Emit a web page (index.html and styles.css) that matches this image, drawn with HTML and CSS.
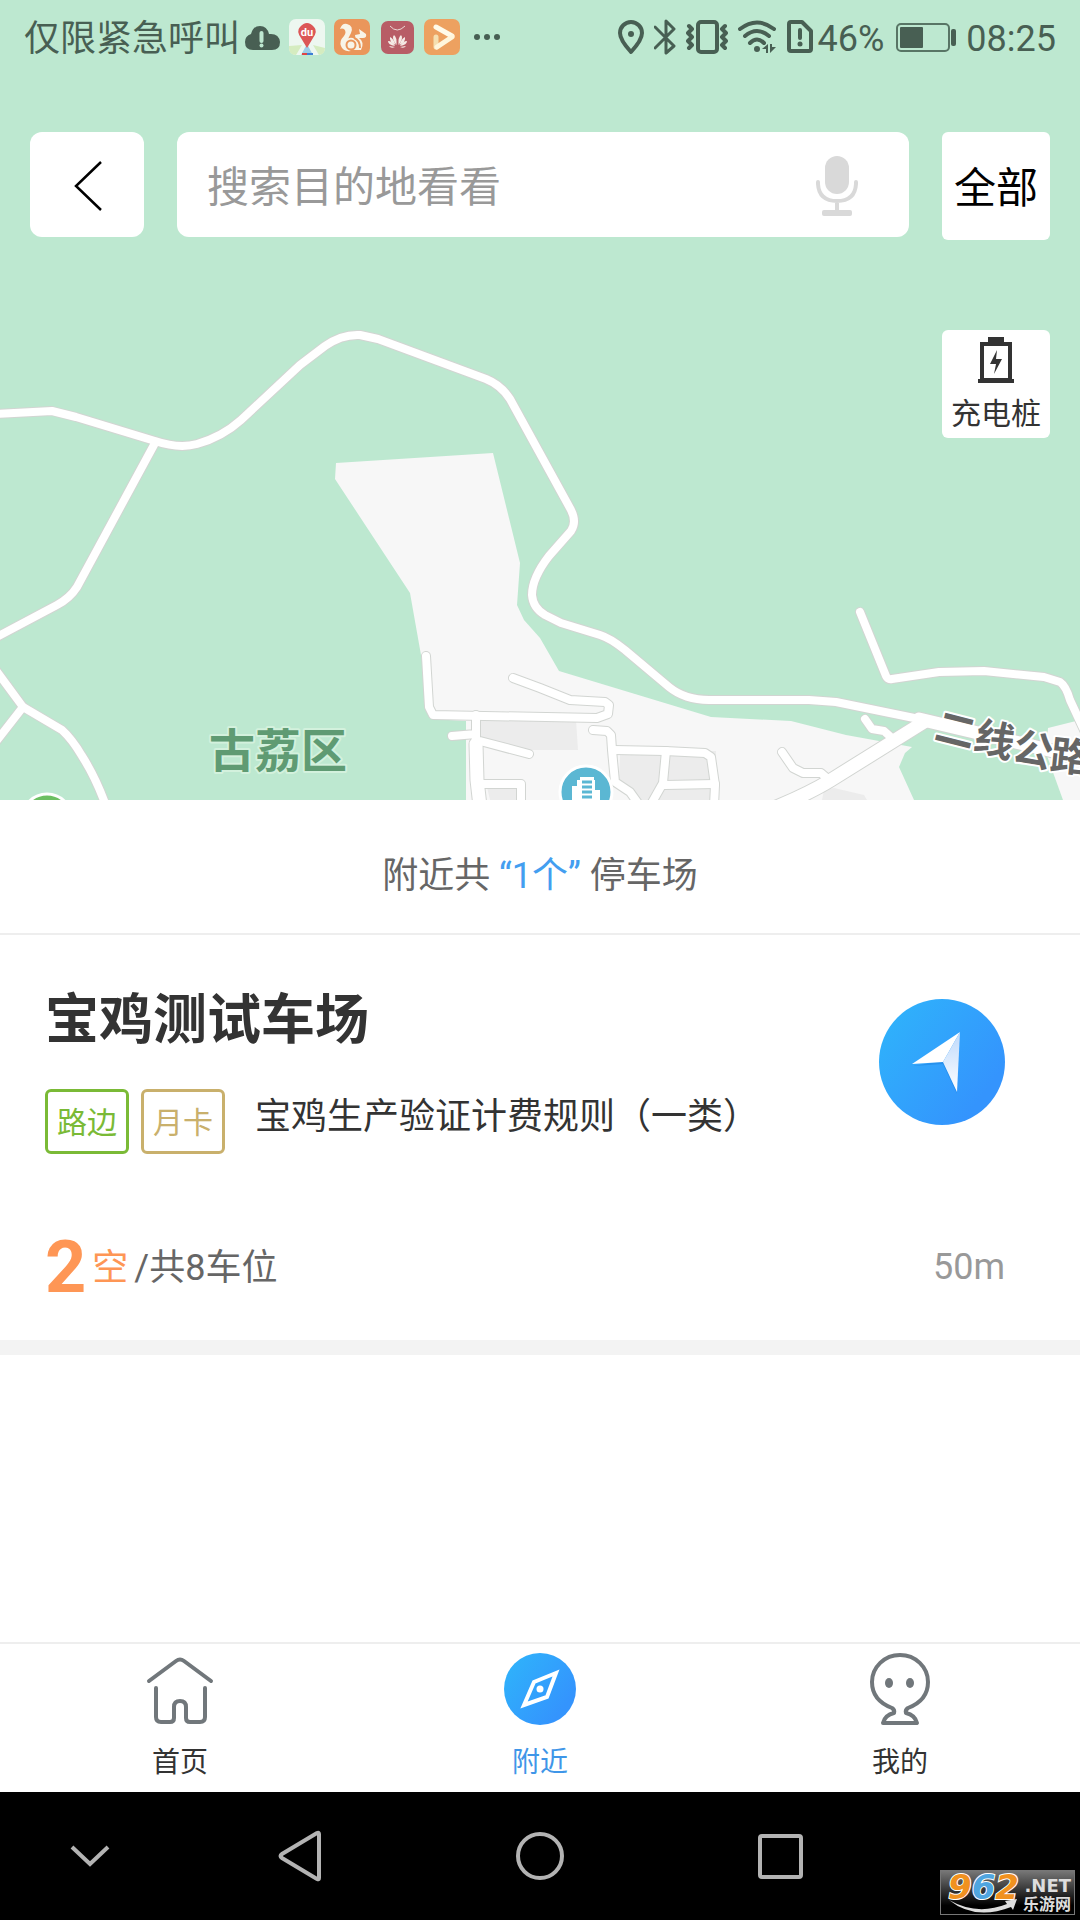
FILE: index.html
```html
<!DOCTYPE html>
<html lang="zh-CN">
<head>
  <meta charset="UTF-8">
  <title>附近停车场</title>
  <meta name="viewport" content="width=device-width, initial-scale=1.0">
  <link rel="stylesheet" href="styles.css">
</head>
<body>
<div class="app">

  <!-- Map -->
  <section class="map">
    <svg class="map-canvas" viewBox="0 0 1080 800" preserveAspectRatio="xMidYMid slice" aria-hidden="true">
      <defs>
        <g id="roads">
          <path d="M-5 414 L52 411 L76 417 L155 441 Q179 449 197 444 Q222 437 241 420 L300 365 L325 346 Q342 334 360 335 L378 339 L486 379 Q501 385 510 399 L571 510 Q577 522 571 531 L549 556 Q532 578 532 595 Q533 608 545 615 L561 623 L600 635 Q610 638 625 650 L669 687 Q685 700 709 700 L809 700 L836 702 L924 720"/>
          <path d="M155 443 L77 587 Q70 598 57 605 L-5 638"/>
          <path d="M-5 669 L23 707 L62 730 Q72 739 82 756 Q96 778 106 806"/>
          <path d="M23 707 L-5 743"/>
          <path d="M860 612 L886 676 Q888 680 892 679 L939 672 L984 671 L1044 677 L1060 682 Q1066 686 1070 700 L1084 730"/>
          <path d="M865 719 L872 729 L884 731 L893 739"/>
          <path d="M782 752 L793 768 L803 773 L821 773 L828 779"/>
        </g>
        <g id="streets">
          <path d="M426 656 L429 707 L433 715 L597 718 L608 714 L609 705 L605 702 L570 700 L540 688 L513 678"/>
          <path d="M476 715 L476 741 M452 736 L476 734 M480 741 L529 754 M480 784 L521 784 L521 806"/>
          <path d="M593 730 L607 731 L611 735 L612 750 L615 782 L630 792 L640 806"/>
          <path d="M614 750 L665 751 L705 753 L711 757 L715 785 L714 806"/>
          <path d="M666 751 L663 783 L650 806 M665 785 L715 784"/>
        </g>
        <g id="main-roads">
          <path d="M924 722 L831 780 Q810 793 774 808"/>
          <path d="M476 744 L477 780 L480 806"/>
        </g>
        <path id="highway" d="M919 719 L974 732 L1053 751 L1090 762"/>
        <path id="highway-name" d="M933 739 L1047 768 Q1060 771 1130 776"/>
      </defs>

      <rect class="forest" width="1080" height="800"/>
      <path class="land" d="M336 463 L493 453 L520 563 L517 605 L524 620 L540 638 L559 671 L711 717 L791 721 L846 735 L912 747 L905 753 L899 767 L914 800 L466 800 L466 721 L432 719 L421 655 L410 593 L335 479 Z"/>
      <path class="land" d="M1063 800 L1046 753 L1048 728 L1080 720 V800 Z"/>
      <path class="block" d="M480 720 H576 L578 750 H515 L480 741 Z M620 755 H662 L660 784 L650 800 H641 L619 782 Z M668 751 H716 V800 H652 Z M487 787 H520 V800 H490 Z M822 800 L824 790 L834 788 L864 795 L867 800 Z"/>

      <use href="#roads" class="road-edge"/>
      <use href="#streets" class="road-edge"/>
      <use href="#highway" class="main-edge"/>
      <use href="#main-roads" class="main-edge"/>
      <use href="#roads" class="road"/>
      <use href="#streets" class="road"/>
      <use href="#highway" class="main"/>
      <use href="#main-roads" class="main"/>

      <!-- place markers -->
      <circle class="poi-blue" cx="586" cy="792" r="26"/>
      <g class="building">
        <path d="M572 800 V786 H577 V780 H580 V777 H594 V780 H595 V790 H600 V800 Z"/>
        <path class="windows" d="M582 782 H592 M582 787 H592 M582 792 H592 M582 797 H592"/>
      </g>
      <circle class="poi-green" cx="47" cy="819" r="25"/>

      <text class="district" x="209" y="767">古荔区</text>
      <text class="highway-text"><textPath href="#highway-name">二线公路</textPath></text>
    </svg>

    <div class="map-overlay">
      <header class="status-bar">
        <div class="status-left">
          <span class="status-text">仅限紧急呼叫</span>
          <div class="status-apps">
            <svg width="36" height="36" viewBox="0 0 36 36" aria-hidden="true">
              <path d="M9 31 Q1 31 1 23 Q1 17 7 15 Q9 7 16 7 Q23 7 25 15 Q35 14 36 23 Q36 31 28 31 Z" fill="#485f53"/>
              <path d="M17.500 14 V22" stroke="#bde8d0" stroke-width="4" stroke-linecap="round"/>
              <circle cx="17.500" cy="26.500" r="2" fill="#bde8d0"/>
            </svg>
            <svg width="36" height="36" viewBox="0 0 36 36" aria-hidden="true">
              <rect width="36" height="36" rx="7" fill="#edf7f0"/>
              <path d="M0 27 L13 26 L7 36 Q0 36 0 29 Z M24 26 L36 29 Q36 35 30 36 Z" fill="#d5ecc0"/>
              <path d="M18 25 L24 36 H12 Z" fill="#9ccde8"/>
              <path d="M13 35 H18" stroke="#e04444" stroke-width="2"/>
              <path d="M18 35 H24" stroke="#3d7ed6" stroke-width="2"/>
              <path d="M18 29 L12 19 Q7 12 11 8 Q18 0 25 8 Q29 12 24 19 Z" fill="#dc5656"/>
              <text class="du" x="18" y="17">du</text>
            </svg>
            <svg width="36" height="36" viewBox="0 0 36 36" aria-hidden="true">
              <rect width="36" height="36" rx="7" fill="#ea965b"/>
              <path d="M6 10 Q8 4 13 5 Q20 7 17 14 Q14 19 13 24 Q12 30 17 32 Q9 33 7 27 Q5 22 10 17 Q13 13 10 10 Q8 9 6 10 Z" fill="#f8f4e8"/>
              <path d="M21 16 L26 15 L25 10 L32 15 Q33 19 29 19 L25 19 Q31 23 27 31 H13 Q8 27 12 21 Q16 17 21 20 Q26 24 23 30" fill="#f8f4e8"/>
              <circle cx="17" cy="26" r="4.500" fill="none" stroke="#ea965b" stroke-width="2"/>
              <path d="M20 19 Q26 21 26 29" fill="none" stroke="#ea965b" stroke-width="2"/>
            </svg>
            <svg width="36" height="36" viewBox="0 0 36 36" aria-hidden="true">
              <rect x="2" y="2" width="33" height="33" rx="7" fill="#b85d66"/>
              <path d="M11 7 Q18 15 26 7" fill="none" stroke="#ecd9d6" stroke-width="1"/>
              <g fill="#f5ebe6">
                <path d="M17.500 26 Q12 19 15 16 Q18 18 17.500 26 Z M19.500 26 Q25 19 22 16 Q19 18 19.500 26 Z"/>
                <path d="M16.500 26 Q10 23 11 18 Q15 20 16.500 26 Z M20.500 26 Q27 23 26 18 Q22 20 20.500 26 Z"/>
                <path d="M16 27 Q9 26 9 22 Q13 22 16 27 Z M21 27 Q28 26 28 22 Q24 22 21 27 Z"/>
                <path d="M16 28 Q12 30 10 27 Z M21 28 Q25 30 27 27 Z"/>
              </g>
            </svg>
            <svg width="36" height="36" viewBox="0 0 36 36" aria-hidden="true">
              <rect width="36" height="36" rx="7" fill="#eda160"/>
              <path d="M12 8 L28 17" stroke="#fffbea" stroke-width="5" stroke-linecap="round"/>
              <path d="M12 18 V28" stroke="#f5dfb0" stroke-width="5" stroke-linecap="round"/>
              <path d="M13 28 L28 18" stroke="#fff6dc" stroke-width="5" stroke-linecap="round"/>
            </svg>
            <svg width="36" height="36" viewBox="0 0 36 36" fill="#485f53" aria-hidden="true">
              <circle cx="8" cy="18" r="3"/><circle cx="18" cy="18" r="3"/><circle cx="28" cy="18" r="3"/>
            </svg>
          </div>
        </div>
        <div class="status-right">
          <svg class="line" width="26" height="36" viewBox="0 0 26 36" aria-hidden="true">
            <path d="M13 33 Q2 21 2 14 A11 11 0 0 1 24 14 Q24 21 13 33 Z"/>
            <circle cx="13" cy="15" r="3" fill="#485f53" stroke="none"/>
          </svg>
          <svg class="line thin" width="22" height="36" viewBox="0 0 22 36" aria-hidden="true">
            <path d="M1 8 L20 27 L12 34 V2 L20 10 L1 29"/>
          </svg>
          <svg class="line" width="42" height="36" viewBox="0 0 42 36" aria-hidden="true">
            <rect x="12" y="3" width="19" height="30" rx="3"/>
            <path d="M3 7 L6 10 L2 14 L6 18 L2 22 L6 26 L3 29 M39 7 L36 10 L40 14 L36 18 L40 22 L36 26 L39 29"/>
          </svg>
          <svg class="line" width="38" height="36" viewBox="0 0 38 36" aria-hidden="true">
            <path d="M2 10 Q19 -3 36 10 M7 17 Q19 7 31 17 M12 24 Q19 17 26 24"/>
            <circle cx="19" cy="30" r="3" fill="#485f53" stroke="none"/>
            <path d="M24 30 L30 25 V34 H28 V30 Z M32 25 V34 L38 28 H34 V25 Z" fill="#485f53" stroke="none"/>
          </svg>
          <div class="status-sim">
            <svg class="line" width="28" height="36" viewBox="0 0 28 36" aria-hidden="true">
              <path d="M5 3 H16 L25 12 V30 Q25 32 23 32 H5 Q3 32 3 30 V5 Q3 3 5 3 Z M14 11 V19"/>
              <circle cx="14" cy="25" r="2.500" fill="#485f53" stroke="none"/>
            </svg>
            <span class="status-text">46%</span>
          </div>
          <svg width="62" height="36" viewBox="0 0 62 36" fill="none" aria-hidden="true">
            <rect x="3" y="5" width="52" height="27" rx="4" stroke="#587565" stroke-width="2"/>
            <rect x="6" y="8" width="23" height="21" rx="1" fill="#485f53"/>
            <rect x="57" y="10" width="5" height="17" rx="2" fill="#485f53"/>
          </svg>
          <time class="status-text">08:25</time>
        </div>
      </header>

      <div class="search-row">
        <button class="back-btn" type="button" aria-label="返回">
          <svg width="32" height="52" viewBox="0 0 32 52" aria-hidden="true">
            <path d="M30 3 L5 27 L30 51" fill="none" stroke="#000" stroke-width="2.500"/>
          </svg>
        </button>
        <div class="search-box">
          <input type="search" placeholder="搜索目的地看看" aria-label="搜索目的地看看">
          <button class="mic-btn" type="button" aria-label="语音搜索">
            <svg width="42" height="60" viewBox="0 0 42 60" aria-hidden="true">
              <rect x="9" y="0" width="24" height="38" rx="12" fill="#d9d9d9"/>
              <path d="M2 26 V28 Q3 45 21 45 Q39 45 40 28 V26 M21 45 V57" fill="none" stroke="#d9d9d9" stroke-width="4" stroke-linecap="round"/>
              <rect x="6" y="54" width="30" height="6" rx="2" fill="#d9d9d9"/>
            </svg>
          </button>
        </div>
        <button class="all-btn" type="button">全部</button>
      </div>

      <button class="charge-btn" type="button">
        <svg width="36" height="48" viewBox="0 0 36 48" aria-hidden="true">
          <path d="M10 1 H26 V6 H10 Z" fill="#333"/>
          <path d="M4 8 H32 V44 H4 Z" fill="none" stroke="#333" stroke-width="4"/>
          <path d="M0 43 H36 V47 H0 Z" fill="#333"/>
          <path d="M19 14 L12 28 H18 L16 38 L24 23 H18 Z" fill="#333"/>
        </svg>
        <span>充电桩</span>
      </button>
    </div>
  </section>

  <!-- Nearby list -->
  <main class="nearby">
    <p class="summary">附近共 <span class="count">“1个”</span> 停车场</p>

    <article class="lot">
      <div class="lot-head">
        <div>
          <h1>宝鸡测试车场</h1>
          <div class="lot-info">
            <span class="tag tag-green">路边</span>
            <span class="tag tag-gold">月卡</span>
            <span class="rule">宝鸡生产验证计费规则（一类）</span>
          </div>
        </div>
        <button class="go-btn" type="button" aria-label="导航">
          <svg width="126" height="126" viewBox="0 0 126 126" aria-hidden="true">
            <defs>
              <linearGradient id="blue" x1="0" y1="0.200" x2="0.800" y2="0.800">
                <stop offset="0" stop-color="#2fb2fb"/>
                <stop offset="1" stop-color="#3494fd"/>
              </linearGradient>
              <linearGradient id="wing" x1="0" y1="0" x2="0" y2="1">
                <stop offset="0" stop-color="#bdd9fc"/>
                <stop offset="1" stop-color="#fff"/>
              </linearGradient>
            </defs>
            <circle cx="63" cy="63" r="63" fill="url(#blue)"/>
            <path d="M34 67 L64 65 L78 95 L77 90 L64 62 Z" fill="#197fdd" opacity="0.500"/>
            <path d="M81 33 L33 65 L64 63 Z" fill="#fff"/>
            <path d="M81 33 L64 63 L78 93 Z" fill="url(#wing)"/>
          </svg>
        </button>
      </div>
      <div class="lot-foot">
        <p class="spaces"><strong>2</strong><span class="free">空</span><span>/共8车位</span></p>
        <span class="distance">50m</span>
      </div>
    </article>
  </main>

  <!-- Tabs -->
  <nav class="tabs">
    <a href="#home">
      <svg width="72" height="72" viewBox="0 0 72 72" fill="none" stroke="#71777b" stroke-width="4" stroke-linecap="round" stroke-linejoin="round" aria-hidden="true">
        <path d="M5 28 L32 8 Q36 5 40 8 L67 28"/>
        <path d="M12 35 V64 Q12 69 17 69 H26 Q30 69 30 65 V54 Q30 48 36 48 Q42 48 42 54 V65 Q42 69 46 69 H56 Q61 69 61 64 V35"/>
      </svg>
      <span>首页</span>
    </a>
    <a class="active" href="#nearby">
      <svg width="72" height="72" viewBox="0 0 72 72" aria-hidden="true">
        <circle cx="36" cy="36" r="36" fill="url(#blue)"/>
        <path d="M52 20 L30 29 L20 52 L43 44 Z" fill="none" stroke="#fff" stroke-width="4"/>
        <circle cx="36" cy="36" r="3.500" fill="#fff"/>
      </svg>
      <span>附近</span>
    </a>
    <a href="#mine">
      <svg width="72" height="72" viewBox="0 0 72 72" fill="none" stroke="#71777b" stroke-width="4" stroke-linejoin="round" aria-hidden="true">
        <path d="M30 60 Q31 57 28 55 C15 50 8 41 8 29 A28 27 0 0 1 64 29 C64 41 57 50 44 55 Q41 57 42 60 Q51 62 53 70 H19 Q21 62 30 60 Z"/>
        <ellipse cx="25" cy="30" rx="4" ry="5" fill="#71777b" stroke="none"/>
        <ellipse cx="46" cy="30" rx="4" ry="5" fill="#71777b" stroke="none"/>
      </svg>
      <span>我的</span>
    </a>
  </nav>

  <!-- System keys -->
  <footer class="sys-nav">
    <button type="button" aria-label="收起">
      <svg width="48" height="52" viewBox="0 0 48 52"><path d="M6 17 L24 34 L42 17"/></svg>
    </button>
    <button type="button" aria-label="返回上页">
      <svg width="48" height="52" viewBox="0 0 48 52"><path d="M43 4 V48 Q43 50 41 49 L6 28 Q3 26 6 24 L41 3 Q43 2 43 4 Z"/></svg>
    </button>
    <button type="button" aria-label="主屏幕">
      <svg width="48" height="52" viewBox="0 0 48 52"><circle cx="24" cy="26" r="22"/></svg>
    </button>
    <button type="button" aria-label="最近任务">
      <svg width="48" height="52" viewBox="0 0 48 52"><rect x="4" y="6" width="41" height="41" rx="2"/></svg>
    </button>
    <div class="badge">
      <svg width="72" height="14" viewBox="0 0 72 14" aria-hidden="true"><path d="M2 1 Q30 17 60 5 L58 2 L70 0 L66 11 L64 8 Q28 22 2 1 Z" fill="#ddd"/></svg>
      <b class="badge-num">9<i>6</i>2</b>
      <span class="badge-side"><b>.NET</b><b class="badge-cn">乐游网</b></span>
    </div>
  </footer>

</div>
</body>
</html>
```
FILE: styles.css
```css
* { box-sizing: border-box; }
body {
  margin: 0;
  background: #fff;
  color: #333;
  font-family: Roboto, "Noto Sans CJK SC", sans-serif;
  font-size: 36px;
  line-height: 48px;
}
h1, p { margin: 0; }
svg { display: block; flex: none; }
button {
  padding: 0; border: none; background: #fff; color: inherit;
  font: inherit; cursor: pointer;
}
a { color: inherit; text-decoration: none; }
.app { display: flex; flex-direction: column; min-height: 100vh; }

/* Map */
.map { position: relative; min-height: 800px; overflow: hidden; background: #bde8d0; }
.map-canvas { position: absolute; inset: 0; width: 100%; height: 100%; }
.map-overlay { position: relative; display: flex; flex-direction: column; }
.forest { fill: #bde8d0; }
.land { fill: #f7f7f7; }
.block { fill: #ececec; }
.road, .road-edge, .main, .main-edge { fill: none; stroke-linecap: round; stroke-linejoin: round; }
.road { stroke: #fff; stroke-width: 8px; }
.road-edge { stroke: #d2d5d2; stroke-width: 10px; }
.main { stroke: #fff; stroke-width: 13px; }
.main-edge { stroke: #d2d5d2; stroke-width: 15px; }
.poi-blue { fill: #5bb7d3; stroke: #fff; stroke-width: 3px; }
.poi-green { fill: #6cbf62; stroke: #fff; stroke-width: 3px; }
.building { fill: #fff; }
.windows { stroke: #5bb7d3; stroke-width: 3px; }
.district, .highway-text { font-weight: bold; paint-order: stroke; stroke-linejoin: round; }
.district { font-size: 46px; fill: #5f9b73; stroke: #d3f1dd; stroke-width: 4px; }
.highway-text { font-size: 40px; fill: #666; stroke: #fff; stroke-width: 4px; }

/* Status bar */
.status-bar {
  display: flex; justify-content: space-between; align-items: center;
  height: 74px; padding: 0 24px; color: #485f53;
}
.status-left { display: flex; align-items: center; gap: 4px; }
.status-apps { display: flex; gap: 9px; }
.status-right { display: flex; align-items: center; gap: 10px; }
.status-sim { display: flex; align-items: center; gap: 4px; }
.status-text { padding-top: 3px; }
.line { fill: none; stroke: #485f53; stroke-width: 4px; stroke-linecap: round; stroke-linejoin: round; }
.thin { stroke-width: 3px; }
.du { font-size: 11px; font-weight: bold; fill: #fff; text-anchor: middle; }

/* Search */
.search-row { display: flex; align-items: flex-start; gap: 33px; padding: 58px 30px 0; }
.back-btn, .search-box { height: 105px; border-radius: 12px; background: #fff; }
.back-btn { display: flex; align-items: center; justify-content: center; width: 114px; }
.search-box { display: flex; align-items: center; flex: 1; min-width: 0; padding: 3px 51px 0 30px; }
.search-box input {
  flex: 1; min-width: 0; padding: 3px 0 0; border: none; outline: none; background: none;
  font: inherit; font-size: 42px; line-height: 60px; color: #333;
}
.search-box input::placeholder { color: #999; opacity: 1; }
.all-btn, .charge-btn { width: 108px; height: 108px; border-radius: 6px; }
.all-btn { padding-top: 6px; font-size: 42px; color: #000; }
.charge-btn {
  display: flex; flex-direction: column; align-items: center; align-self: flex-end;
  gap: 10px; margin: 90px 30px 0; padding-top: 6px;
  font-size: 30px; line-height: 40px;
}

/* Nearby list */
.nearby { flex: 1; }
.summary { padding: 52px 0 33px; border-bottom: 2px solid #eee; color: #666; text-align: center; }
.count { color: #439ef0; }
.lot { padding: 48px 75px 36px 45px; border-bottom: 15px solid #f3f3f3; }
.lot-head { display: flex; justify-content: space-between; }
.lot h1 { padding-top: 2px; font-size: 54px; line-height: 72px; }
.lot-info { display: flex; gap: 12px; margin-top: 32px; }
.tag {
  width: 84px; height: 65px; border: 3px solid; border-radius: 6px;
  font-size: 30px; line-height: 62px; text-align: center;
}
.tag-green { color: #7aba36; }
.tag-gold { color: #c9b06c; }
.rule { margin-left: 18px; line-height: 56px; }
.go-btn { align-self: flex-start; margin-top: 16px; border-radius: 50%; }
.lot-foot { display: flex; justify-content: space-between; align-items: center; margin-top: 76px; }
.spaces { display: flex; align-items: center; gap: 6px; padding-top: 2px; color: #666; }
.spaces strong { font-size: 72px; line-height: 72px; color: #fe9655; }
.free { color: #fe9655; }
.distance { color: #999; }

/* Tabs */
.tabs {
  display: grid; grid-template-columns: repeat(3, 1fr);
  height: 150px; border-top: 2px solid #eee;
}
.tabs a {
  display: flex; flex-direction: column; align-items: center;
  gap: 20px; padding-top: 9px; font-size: 28px; line-height: 36px;
}
.tabs .active { color: #3f96e8; }

/* System keys */
.sys-nav {
  position: relative; display: grid; grid-template-columns: 3fr 4fr 4fr 4fr 3fr;
  align-items: center; height: 128px; background: #000;
}
.sys-nav button { display: flex; justify-content: center; background: none; }
.sys-nav button svg { fill: none; stroke: #b3b3b3; stroke-width: 4px; }
.badge {
  position: absolute; right: 5px; bottom: 5px;
  display: flex; justify-content: space-between; width: 135px; height: 45px; padding: 0 3px 0 7px;
  border: 1px solid #777; background: linear-gradient(#777, #000 80%);
  color: #ddd; font-family: "DejaVu Sans", "Noto Sans CJK SC", sans-serif;
}
.badge svg { position: absolute; left: 6px; bottom: 1px; }
.badge-num {
  font-size: 34px; font-style: italic; line-height: 32px; color: #f0911f;
  paint-order: stroke; -webkit-text-stroke: 2px #fff;
}
.badge-num i { color: #4fa5df; }
.badge-side { display: flex; flex-direction: column; align-items: flex-end; padding-top: 5px; font-size: 18px; line-height: 20px; }
.badge-cn { font-size: 16px; line-height: 18px; }
```
